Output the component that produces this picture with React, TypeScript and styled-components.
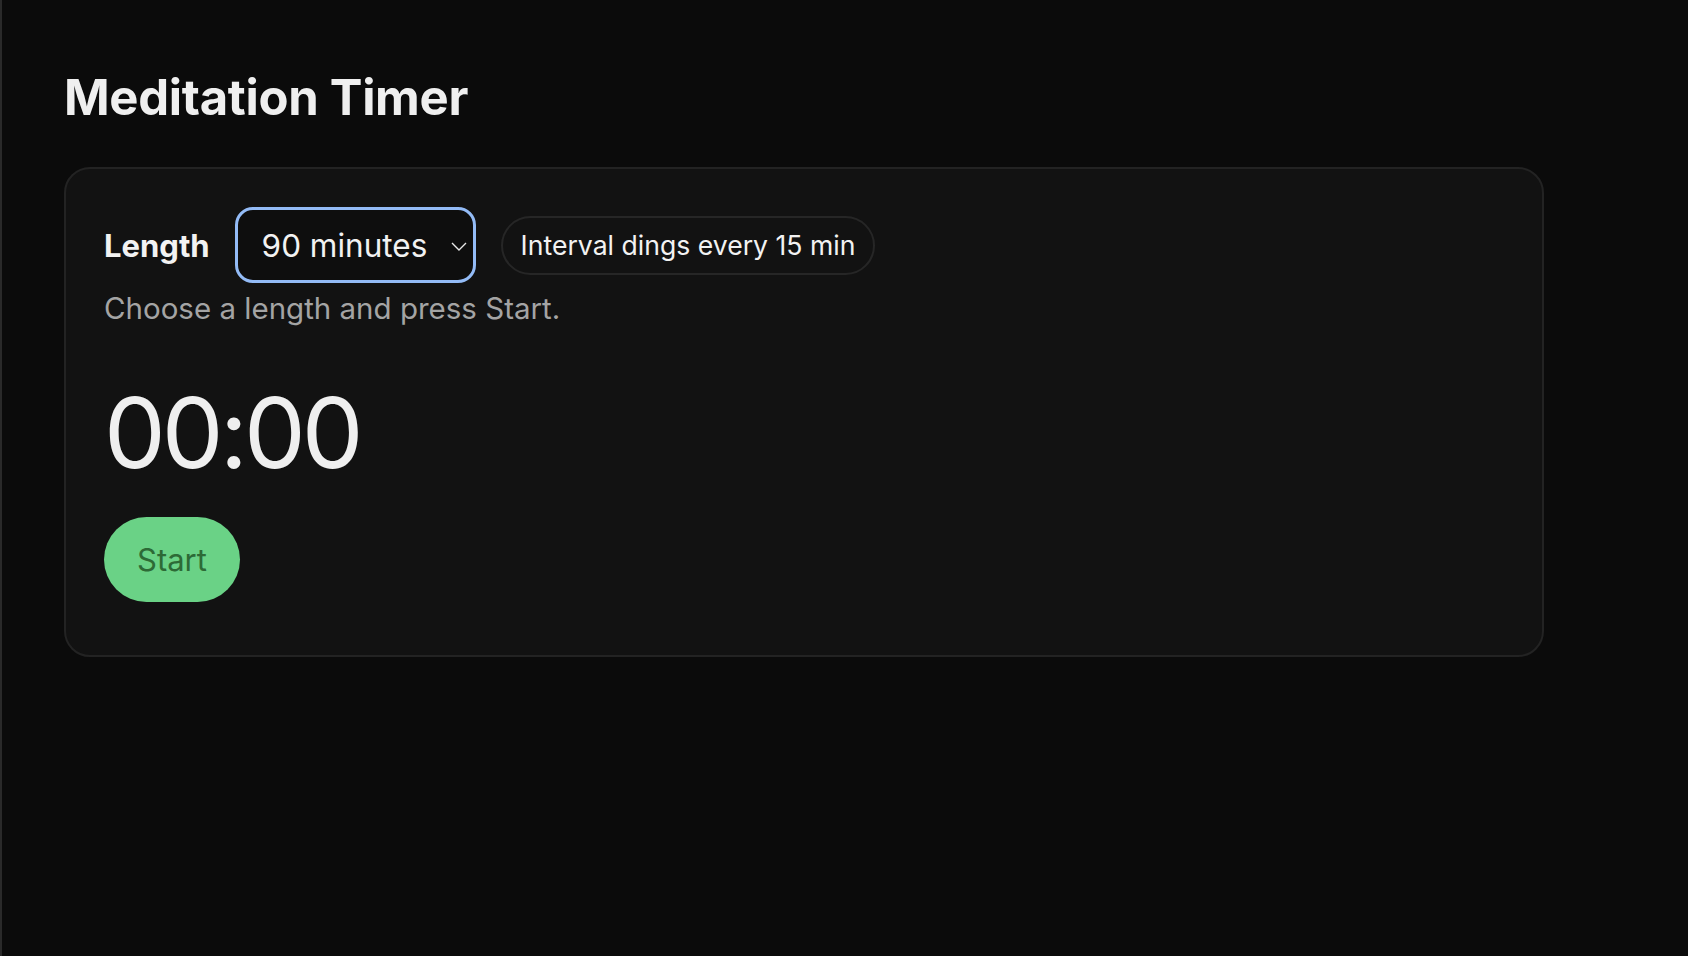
import React, { useState } from "react";
import styled, { createGlobalStyle } from "styled-components";

const GlobalStyle = createGlobalStyle`
  html, body {
    margin: 0;
    padding: 0;
    background: #0b0b0b;
  }
  body {
    font-family: Inter, "Noto Sans", "Liberation Sans", sans-serif;
    color: #efefef;
  }
  * {
    box-sizing: border-box;
  }
`;

const Page = styled.main`
  min-height: 100vh;
  border-left: 2px solid #2a2a2a;
  padding: 68px 0 0 62px;
`;

const Title = styled.h1`
  margin: 0 0 39px;
  font-size: 49px;
  line-height: 60px;
  font-weight: 700;
  letter-spacing: -0.3px;
  color: #efefef;
`;

const Card = styled.section`
  width: 1480px;
  min-height: 489px;
  padding: 38px 38px 53px;
  background: #121212;
  border: 2px solid #232323;
  border-radius: 26px;
  display: flex;
  flex-direction: column;
  align-items: flex-start;
`;

const Controls = styled.div`
  display: flex;
  align-items: center;
  gap: 25px;
`;

const Label = styled.label`
  font-size: 31px;
  font-weight: 700;
  color: #f2f2f2;
`;

const SelectWrap = styled.div`
  position: relative;
  display: flex;
`;

const Select = styled.select`
  appearance: none;
  -webkit-appearance: none;
  width: 241px;
  height: 76px;
  padding: 0 42px 0 24px;
  border: 3px solid #93bbf6;
  border-radius: 18px;
  background: #0e0e0e;
  color: #f2f2f2;
  font-family: inherit;
  font-size: 31.5px;
  outline: none;
`;

const Chevron = styled.svg`
  position: absolute;
  right: 9px;
  top: 35px;
  width: 16px;
  height: 9px;
  pointer-events: none;
`;

const Pill = styled.span`
  display: inline-flex;
  align-items: center;
  height: 59px;
  padding: 0 18px;
  border: 2px solid #262626;
  border-radius: 999px;
  font-size: 26.6px;
  color: #f2f2f2;
`;

const Hint = styled.p`
  margin: 8px 0 0;
  font-size: 29.5px;
  line-height: 35px;
  color: #a4a4a4;
`;

const Clock = styled.div`
  margin-top: 48px;
  font-size: 98px;
  line-height: 118px;
  font-weight: 400;
  letter-spacing: -4px;
  color: #efefef;
`;

const StartButton = styled.button`
  margin-top: 25px;
  height: 85px;
  padding: 0 33px;
  border: none;
  border-radius: 999px;
  background: #6ad286;
  color: #2d6a36;
  font-family: inherit;
  font-size: 31px;
  cursor: pointer;
`;

const lengths = [5, 10, 15, 20, 30, 45, 60, 90];

const App: React.FC = () => {
  const [minutes, setMinutes] = useState(90);

  return (
    <>
      <GlobalStyle />
      <Page>
        <Title>Meditation Timer</Title>
        <Card>
          <Controls>
            <Label htmlFor="length">Length</Label>
            <SelectWrap>
              <Select
                id="length"
                value={minutes}
                onChange={(e) => setMinutes(Number(e.target.value))}
              >
                {lengths.map((m) => (
                  <option key={m} value={m}>{`${m} minutes`}</option>
                ))}
              </Select>
              <Chevron viewBox="0 0 16 9" aria-hidden="true">
                <path d="M1 1l7 7 7-7" fill="none" stroke="#e8e8e8" strokeWidth="1.4" />
              </Chevron>
            </SelectWrap>
            <Pill>Interval dings every 15 min</Pill>
          </Controls>
          <Hint>Choose a length and press Start.</Hint>
          <Clock>00:00</Clock>
          <StartButton>Start</StartButton>
        </Card>
      </Page>
    </>
  );
};

export default App;
